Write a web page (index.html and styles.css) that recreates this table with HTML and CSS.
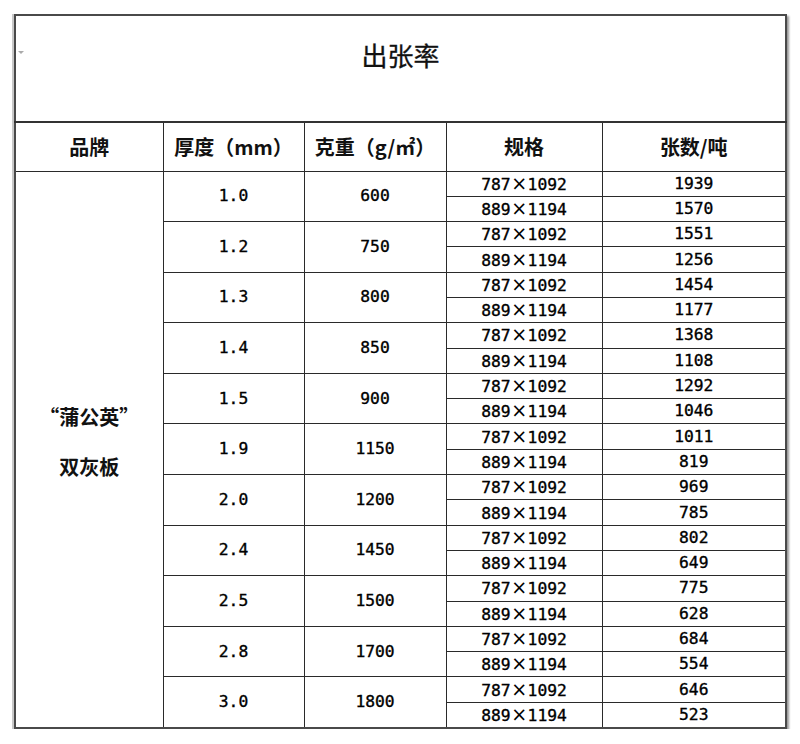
FILE: index.html
```html
<!DOCTYPE html>
<html lang="zh-CN">
<head>
<meta charset="utf-8">
<title>出张率</title>
<link rel="stylesheet" href="styles.css">
</head>
<body>
<div class="sheet">
  <span class="marker"></span>
  <table class="rate">
    <colgroup>
      <col class="c1"><col class="c2"><col class="c3"><col class="c4"><col class="c5">
    </colgroup>
    <thead>
      <tr class="title-row"><th colspan="5" class="title">出张率</th></tr>
      <tr class="head-row">
        <th>品牌</th>
        <th>厚度（mm）</th>
        <th>克重（g/㎡）</th>
        <th>规格</th>
        <th>张数/吨</th>
      </tr>
    </thead>
    <tbody>
      <tr>
        <td rowspan="22" class="brand"><div>“蒲公英”</div><div>双灰板</div></td>
        <td rowspan="2" class="num">1.0</td><td rowspan="2" class="num">600</td>
        <td class="num">787<span class="x">×</span>1092</td><td class="num">1939</td>
      </tr>
      <tr><td class="num">889<span class="x">×</span>1194</td><td class="num">1570</td></tr>
      <tr>
        <td rowspan="2" class="num">1.2</td><td rowspan="2" class="num">750</td>
        <td class="num">787<span class="x">×</span>1092</td><td class="num">1551</td>
      </tr>
      <tr><td class="num">889<span class="x">×</span>1194</td><td class="num">1256</td></tr>
      <tr>
        <td rowspan="2" class="num">1.3</td><td rowspan="2" class="num">800</td>
        <td class="num">787<span class="x">×</span>1092</td><td class="num">1454</td>
      </tr>
      <tr><td class="num">889<span class="x">×</span>1194</td><td class="num">1177</td></tr>
      <tr>
        <td rowspan="2" class="num">1.4</td><td rowspan="2" class="num">850</td>
        <td class="num">787<span class="x">×</span>1092</td><td class="num">1368</td>
      </tr>
      <tr><td class="num">889<span class="x">×</span>1194</td><td class="num">1108</td></tr>
      <tr>
        <td rowspan="2" class="num">1.5</td><td rowspan="2" class="num">900</td>
        <td class="num">787<span class="x">×</span>1092</td><td class="num">1292</td>
      </tr>
      <tr><td class="num">889<span class="x">×</span>1194</td><td class="num">1046</td></tr>
      <tr>
        <td rowspan="2" class="num">1.9</td><td rowspan="2" class="num">1150</td>
        <td class="num">787<span class="x">×</span>1092</td><td class="num">1011</td>
      </tr>
      <tr><td class="num">889<span class="x">×</span>1194</td><td class="num">819</td></tr>
      <tr>
        <td rowspan="2" class="num">2.0</td><td rowspan="2" class="num">1200</td>
        <td class="num">787<span class="x">×</span>1092</td><td class="num">969</td>
      </tr>
      <tr><td class="num">889<span class="x">×</span>1194</td><td class="num">785</td></tr>
      <tr>
        <td rowspan="2" class="num">2.4</td><td rowspan="2" class="num">1450</td>
        <td class="num">787<span class="x">×</span>1092</td><td class="num">802</td>
      </tr>
      <tr><td class="num">889<span class="x">×</span>1194</td><td class="num">649</td></tr>
      <tr>
        <td rowspan="2" class="num">2.5</td><td rowspan="2" class="num">1500</td>
        <td class="num">787<span class="x">×</span>1092</td><td class="num">775</td>
      </tr>
      <tr><td class="num">889<span class="x">×</span>1194</td><td class="num">628</td></tr>
      <tr>
        <td rowspan="2" class="num">2.8</td><td rowspan="2" class="num">1700</td>
        <td class="num">787<span class="x">×</span>1092</td><td class="num">684</td>
      </tr>
      <tr><td class="num">889<span class="x">×</span>1194</td><td class="num">554</td></tr>
      <tr>
        <td rowspan="2" class="num">3.0</td><td rowspan="2" class="num">1800</td>
        <td class="num">787<span class="x">×</span>1092</td><td class="num">646</td>
      </tr>
      <tr><td class="num">889<span class="x">×</span>1194</td><td class="num">523</td></tr>
    </tbody>
  </table>
</div>
</body>
</html>
```

FILE: styles.css
```css
html, body {
  margin: 0;
  padding: 0;
  background: #ffffff;
}

body {
  font-family: "Noto Sans CJK SC", "DejaVu Sans", sans-serif;
  color: #111;
}

.sheet {
  position: relative;
  padding: 14px 15px 0 14px;
  width: 771px;
}

.marker {
  position: absolute;
  left: 18px;
  top: 51px;
  width: 0;
  height: 0;
  border-left: 3px solid transparent;
  border-right: 3px solid transparent;
  border-top: 3px solid #aaa;
}

.rate {
  width: 771px;
  table-layout: fixed;
  border-collapse: collapse;
  border: 2px solid #4a4a4a;
  box-shadow: 2px 2px 2px #999, -2px 0 0 #c8c8c8;
}

.c1 { width: 148px; }
.c2 { width: 141px; }
.c3 { width: 142px; }
.c4 { width: 156px; }
.c5 { width: 184px; }

.rate th,
.rate td {
  border: 1px solid #2a2a2a;
  padding: 0;
  text-align: center;
}

.title-row { height: 107px; }

.rate th.title {
  vertical-align: top;
  padding-top: 20px;
  font-size: 26px;
  font-weight: 400;
  -webkit-text-stroke: 0.3px #111;
  border-bottom: 2px solid #333;
}

.head-row { height: 49px; }

.head-row th {
  font-size: 20px;
  font-weight: 700;
}

.rate tbody tr { height: 25.3px; }

.num {
  font-family: "DejaVu Sans Mono", "Liberation Mono", monospace;
  font-size: 16.3px;
  line-height: 20px;
  color: #000;
  -webkit-text-stroke: 0.35px #000;
}

.x {
  display: inline-block;
  width: 17px;
  text-align: center;
  font-family: "DejaVu Sans", sans-serif;
  font-size: 19px;
  -webkit-text-stroke: 0;
}

.brand {
  font-size: 20px;
  font-weight: 700;
  line-height: 50px;
  padding-bottom: 14px !important;
}
```
